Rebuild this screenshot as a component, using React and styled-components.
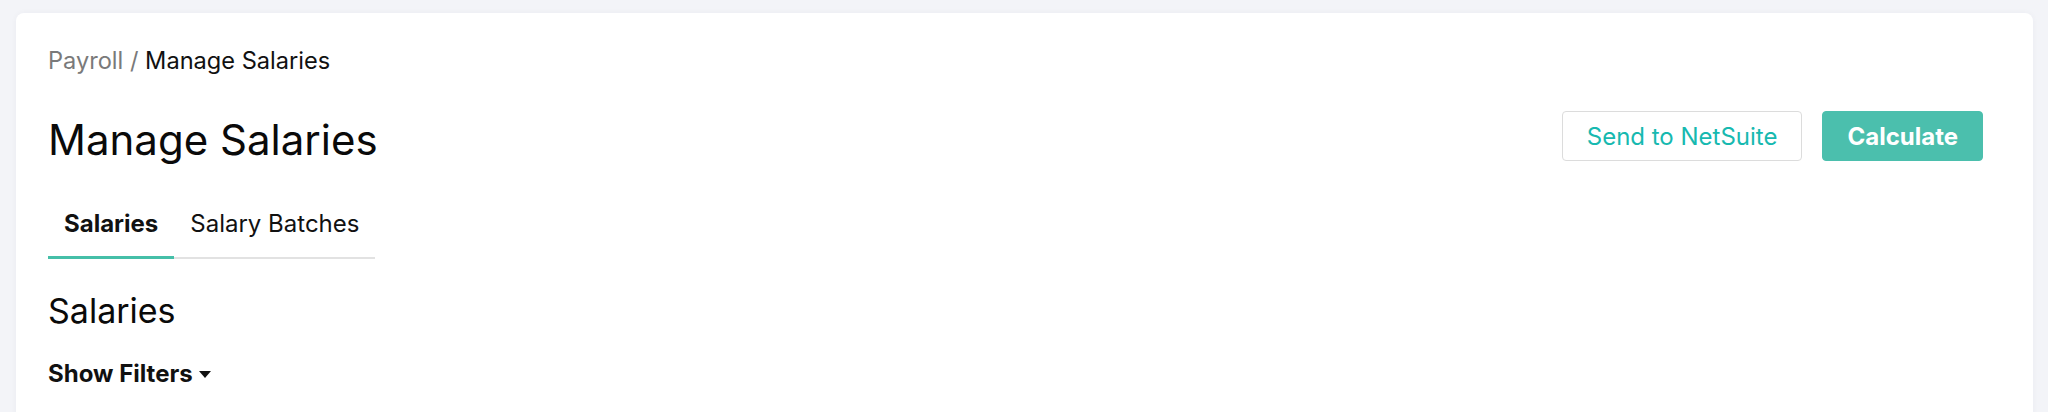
import React, { useState } from "react";
import styled, { createGlobalStyle } from "styled-components";

const Global = createGlobalStyle`
  html, body { margin: 0; padding: 0; }
  body {
    background: #f3f4f8;
    font-family: Inter, "Noto Sans", "Liberation Sans", sans-serif;
    color: #111;
  }
`;

const Page = styled.div`
  padding: 13px 15px 0 16px;
  min-height: 412px;
  box-sizing: border-box;
`;

const Card = styled.div`
  background: #fff;
  border-radius: 8px;
  min-height: 460px;
  padding: 30px 50px 40px 32px;
  box-shadow: 0 0 6px rgba(30, 40, 80, 0.04);
  box-sizing: border-box;
`;

const Breadcrumb = styled.nav`
  font-size: 23.6px;
  line-height: 36px;
`;

const Crumb = styled.span`
  color: ${(p) => (p.$current ? "#111" : "#7a7a7a")};
`;

const HeaderRow = styled.div`
  display: flex;
  align-items: flex-start;
  justify-content: space-between;
  margin-top: 32px;
`;

const Title = styled.h1`
  margin: 4px 0 0;
  font-size: 42px;
  font-weight: 400;
  line-height: 1.2;
  color: #0a0a0a;
`;

const Actions = styled.div`
  display: flex;
  gap: 20px;
`;

const Button = styled.button`
  height: 50px;
  padding: 0 24px;
  font-family: inherit;
  font-size: 24px;
  border-radius: 4px;
  cursor: pointer;
  border: 1.5px solid ${(p) => (p.$primary ? "#4bbfad" : "#dcdcdc")};
  background: ${(p) => (p.$primary ? "#4bbfad" : "#fff")};
  color: ${(p) => (p.$primary ? "#fff" : "#17b9b0")};
  font-weight: ${(p) => (p.$primary ? 700 : 400)};
`;

const Tabs = styled.div`
  display: inline-flex;
  margin-top: 31px;
  border-bottom: 2px solid #e2e2e2;
`;

const Tab = styled.button`
  background: none;
  border: none;
  font-family: inherit;
  font-size: 24px;
  line-height: 36px;
  padding: 10px 16px 14px;
  margin-bottom: -2px;
  color: #111;
  cursor: pointer;
  font-weight: ${(p) => (p.$active ? 700 : 400)};
  border-bottom: 3px solid ${(p) => (p.$active ? "#45bfa8" : "transparent")};
`;

const SectionTitle = styled.h2`
  margin: 32px 0 0;
  font-size: 34px;
  font-weight: 400;
  line-height: 1.2;
  color: #0a0a0a;
`;

const FilterToggle = styled.button`
  display: flex;
  align-items: center;
  gap: 6px;
  margin-top: 24px;
  padding: 0;
  background: none;
  border: none;
  font-family: inherit;
  font-size: 24px;
  line-height: 36px;
  font-weight: 700;
  color: #111;
  cursor: pointer;
`;

const Caret = styled.span`
  width: 0;
  height: 0;
  border-left: 6px solid transparent;
  border-right: 6px solid transparent;
  border-top: 7px solid #111;
`;

export default function App() {
  const [tab, setTab] = useState("salaries");
  return (
    <>
      <Global />
      <Page>
        <Card>
          <Breadcrumb>
            <Crumb>Payroll / </Crumb>
            <Crumb $current>Manage Salaries</Crumb>
          </Breadcrumb>
          <HeaderRow>
            <Title>Manage Salaries</Title>
            <Actions>
              <Button>Send to NetSuite</Button>
              <Button $primary>Calculate</Button>
            </Actions>
          </HeaderRow>
          <Tabs>
            <Tab $active={tab === "salaries"} onClick={() => setTab("salaries")}>
              Salaries
            </Tab>
            <Tab $active={tab === "batches"} onClick={() => setTab("batches")}>
              Salary Batches
            </Tab>
          </Tabs>
          <SectionTitle>Salaries</SectionTitle>
          <FilterToggle>
            Show Filters <Caret />
          </FilterToggle>
        </Card>
      </Page>
    </>
  );
}
